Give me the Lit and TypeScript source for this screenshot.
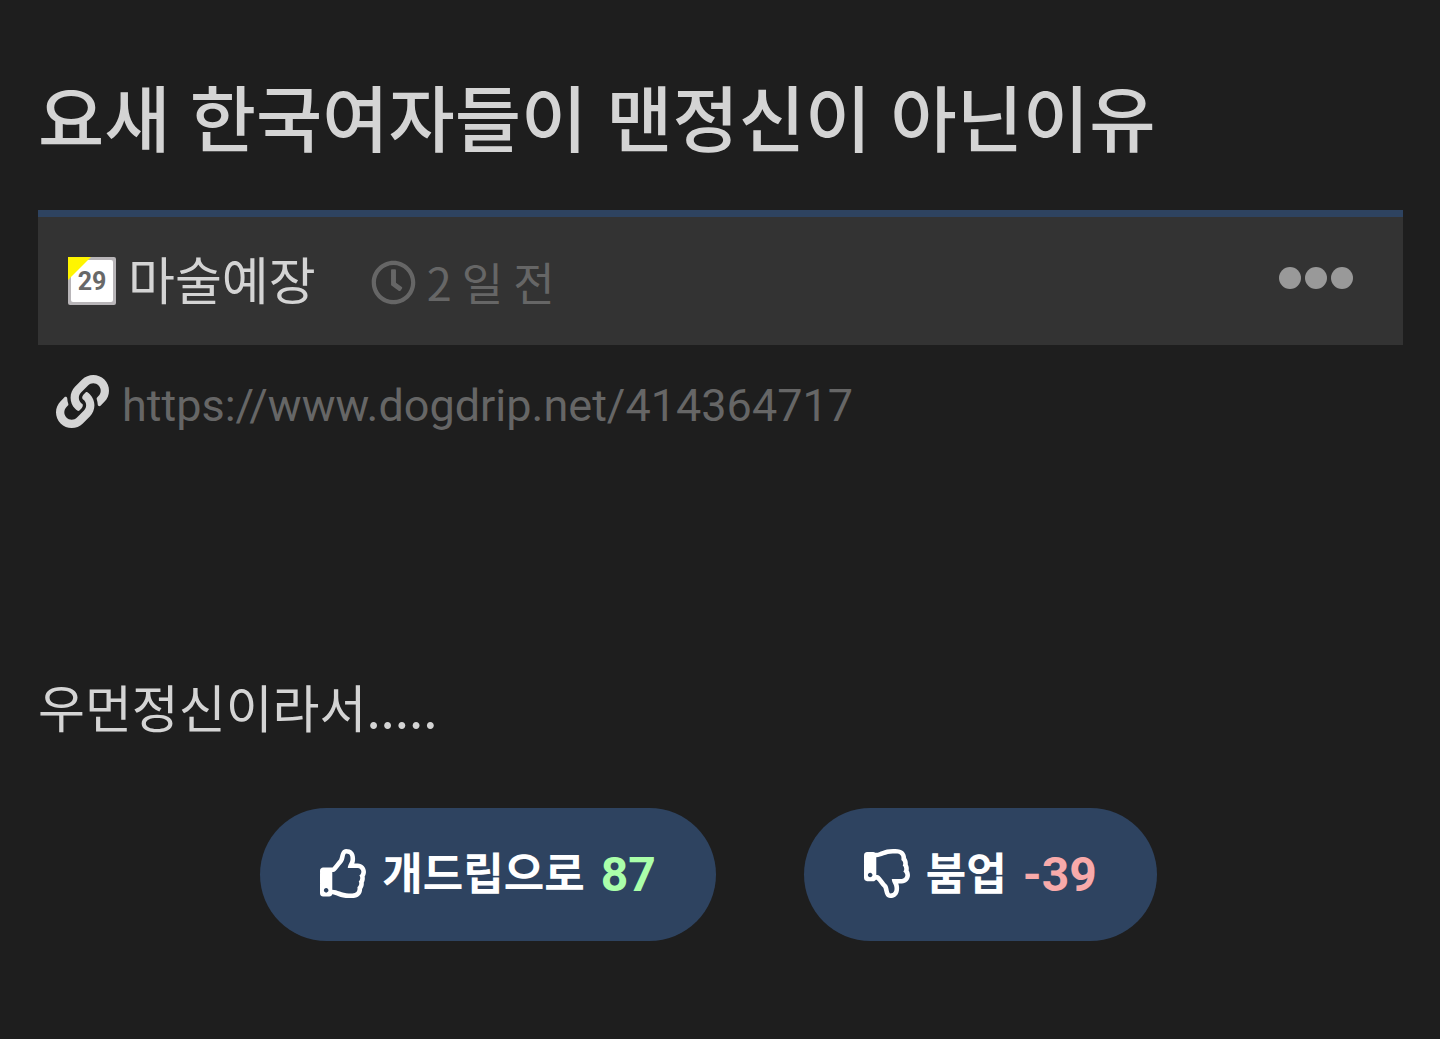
import { LitElement, html, css, svg } from "lit";
import { customElement } from "lit/decorators.js";

const LINK = "M326.612 185.391c59.747 59.809 58.927 155.698.36 214.59-.11.12-.24.25-.36.37l-67.2 67.2c-59.27 59.27-155.699 59.262-214.96 0-59.27-59.26-59.27-155.7 0-214.96l37.106-37.106c9.84-9.84 26.786-3.3 27.294 10.606.648 17.722 3.826 35.527 9.69 52.721 1.986 5.822.567 12.262-3.783 16.612l-13.087 13.087c-28.026 28.026-28.905 73.66-1.155 101.96 28.024 28.579 74.086 28.749 102.325.51l67.2-67.19c28.191-28.191 28.073-73.757 0-101.83-3.701-3.694-7.429-6.564-10.341-8.569a16.037 16.037 0 0 1-6.947-12.606c-.396-10.567 3.348-21.456 11.698-29.806l21.054-21.055c5.521-5.521 14.182-6.199 20.584-1.731a152.482 152.482 0 0 1 20.522 17.197zM467.547 44.449c-59.261-59.262-155.69-59.27-214.96 0l-67.2 67.2c-.12.12-.25.25-.36.37-58.566 58.892-59.387 154.781.36 214.59a152.454 152.454 0 0 0 20.521 17.196c6.402 4.468 15.064 3.789 20.584-1.731l21.054-21.055c8.35-8.35 12.094-19.239 11.698-29.806a16.037 16.037 0 0 0-6.947-12.606c-2.912-2.005-6.64-4.875-10.341-8.569-28.073-28.073-28.191-73.639 0-101.83l67.2-67.19c28.239-28.239 74.3-28.069 102.325.51 27.75 28.3 26.872 73.934-1.155 101.96l-13.087 13.087c-4.35 4.35-5.769 10.79-3.783 16.612 5.864 17.194 9.042 34.999 9.69 52.721.509 13.906 17.454 20.446 27.294 10.606l37.106-37.106c59.271-59.259 59.271-155.699.001-214.959z";
const CLOCK = "M256 8C119 8 8 119 8 256s111 248 248 248 248-111 248-248S393 8 256 8zm0 448c-110.5 0-200-89.5-200-200S145.5 56 256 56s200 89.5 200 200-89.5 200-200 200zm61.8-104.4l-84.9-61.7c-3.1-2.3-4.9-5.9-4.9-9.7V116c0-6.6 5.4-12 12-12h32c6.6 0 12 5.4 12 12v141.7l66.8 48.6c5.4 3.9 6.5 11.4 2.6 16.8L334.6 349c-3.9 5.3-11.4 6.5-16.8 2.6z";
const UP = "M466.27 286.69C475.04 271.84 480 256 480 236.85c0-44.015-37.218-85.58-85.82-85.58H357.7c4.92-12.81 8.85-28.13 8.85-46.54C366.55 31.936 328.86 0 271.28 0c-61.607 0-58.093 94.933-71.76 108.6-22.747 22.747-49.615 66.447-68.76 83.4H32c-17.673 0-32 14.327-32 32v240c0 17.673 14.327 32 32 32h64c14.893 0 27.408-10.174 30.978-23.95 44.509 1.001 75.06 39.94 177.802 39.94 7.22 0 15.22.01 22.22.01 77.117 0 111.986-39.423 112.94-95.33 13.319-18.425 20.299-43.122 17.34-66.99 9.854-18.452 13.664-40.343 8.99-62.99zm-61.75 53.83c12.56 21.13 1.26 49.41-13.94 57.57 7.7 48.78-17.608 65.9-53.12 65.9h-37.82c-71.639 0-118.029-37.82-171.64-37.82V240h10.92c28.36 0 67.98-70.89 94.54-97.46 28.36-28.36 18.91-75.63 37.82-94.54 47.27 0 47.27 32.98 47.27 56.73 0 39.17-28.36 56.72-28.36 94.54h103.99c21.11 0 37.73 18.91 37.82 37.82.09 18.9-12.82 37.81-22.27 37.81 13.489 14.555 16.371 45.236-5.21 65.62zM88 432c0 13.255-10.745 24-24 24s-24-10.745-24-24 10.745-24 24-24 24 10.745 24 24z";
const DOWN = "M466.27 225.31c4.674-22.647.864-44.538-8.99-62.99 2.958-23.868-4.021-48.565-17.34-66.99C438.986 39.423 404.117 0 327 0c-7 0-15 .01-22.22.01C201.195.01 168.997 40 128 40h-10.845c-5.64-4.975-13.042-8-21.155-8H32C14.327 32 0 46.327 0 64v240c0 17.673 14.327 32 32 32h64c11.842 0 22.175-6.438 27.708-16h7.052c19.146 16.953 46.013 60.653 68.76 83.4 13.667 13.667 10.153 108.6 71.76 108.6 57.58 0 95.27-31.936 95.27-104.73 0-18.41-3.93-33.73-8.85-46.54h36.48c48.602 0 85.82-41.565 85.82-85.58 0-19.15-4.96-34.99-13.73-49.84zM64 296c-13.255 0-24-10.745-24-24s10.745-24 24-24 24 10.745 24 24-10.745 24-24 24zm330.18 16.73H290.19c0 37.82 28.36 55.37 28.36 94.54 0 23.75 0 56.73-47.27 56.73-18.91-18.91-9.46-66.18-37.82-94.54C206.9 342.89 167.28 272 138.92 272H128V85.83c53.611 0 100.001-37.82 171.64-37.82h37.82c35.512 0 60.82 17.12 53.12 65.9 15.2 8.16 26.5 36.44 13.94 57.57 21.581 20.384 18.699 51.065 5.21 65.62 9.45 0 22.36 18.91 22.27 37.81-.09 18.91-16.71 37.82-37.82 37.82z";

const icon = (name: string, d: string, width = 512) => html`
  <svg class="icon ${name}" viewBox="0 0 ${width} 512" aria-hidden="true">${svg`<path d=${d}></path>`}</svg>
`;

@customElement("app-root")
export class AppRoot extends LitElement {
  static styles = css`
    :host {
      display: block;
      box-sizing: border-box;
      min-height: 100vh;
      padding: 66px 37px 64px 38px;
      background: #1e1e1e;
      color: #d4d4d4;
      font-family: Roboto, "Noto Sans CJK KR", sans-serif;
      font-size: 51px;
      line-height: 72px;
    }
    .icon { display: block; flex: none; fill: currentColor; }
    .title {
      margin: 0 0 36px;
      font-family: Inter, "Noto Sans CJK KR", sans-serif;
      font-size: 72px;
      font-weight: 500;
      line-height: 108px;
    }
    .meta {
      display: flex;
      align-items: center;
      box-sizing: border-box;
      min-height: 135px;
      padding: 0 50px 0 30px;
      border-top: 7px solid #2e4360;
      background: #333;
    }
    .badge { display: block; flex: none; width: 48px; height: 48px; margin-right: 12px; }
    .badge-text { font: 700 25px Roboto, sans-serif; fill: #686868; }
    .author { color: inherit; text-decoration: none; margin-right: 55px; padding-top: 4px; }
    .time {
      display: flex;
      align-items: center;
      gap: 11px;
      padding-top: 2px;
      color: #666;
      font-size: 45px;
      font-family: "Noto Sans CJK KR", sans-serif;
      font-weight: 400;
    }
    .clock { width: 45px; height: 45px; }
    .more {
      display: flex;
      gap: 4px;
      margin-left: auto;
      padding: 0 0 6px;
      border: 0;
      background: none;
    }
    .dot { width: 22px; height: 22px; border-radius: 50%; background: #999; }
    .source {
      display: flex;
      align-items: center;
      gap: 13px;
      padding: 15px 18px;
    }
    .chain { width: 53px; height: 53px; }
    .url { padding-top: 10px; color: #666; font-size: 45px; text-decoration: none; }
    .content { margin: 213px 0 66px; font-family: "Noto Sans CJK KR", sans-serif; }
    .votes { display: flex; flex-wrap: wrap; justify-content: center; gap: 88px; padding-right: 24px; }
    .vote {
      display: flex;
      align-items: center;
      gap: 16px;
      min-height: 133px;
      padding: 0 60px;
      border: 0;
      border-radius: 67px;
      background: #2e4360;
      color: #fff;
      font: 700 44px/64px Roboto, "Noto Sans CJK KR", sans-serif;
    }
    .thumb { width: 46px; height: 49px; margin-bottom: 3px; }
    .count { font-size: 48px; font-weight: 700; }
    .good { color: #aaffaa; }
    .bad { color: #f8aaaa; }
  `;

  render() {
    return html`
      <main>
        <h1 class="title">요새 한국여자들이 맨정신이 아닌이유</h1>
        <div class="meta">
          <svg class="badge" viewBox="0 0 48 48" role="img" aria-label="29">
            <rect width="48" height="48" rx="2" fill="#b8b5b8"></rect>
            <rect x="3" y="3" width="42" height="42" rx="2" fill="#fff"></rect>
            <path d="M0 0H23L0 23Z" fill="#fff500"></path>
            <text class="badge-text" x="24" y="33" text-anchor="middle">29</text>
          </svg>
          <a class="author" href="#author">마술예장</a>
          <span class="time">${icon("clock", CLOCK)}<time>2 일 전</time></span>
          <button class="more" type="button" aria-label="더보기">
            <span class="dot"></span><span class="dot"></span><span class="dot"></span>
          </button>
        </div>
        <div class="source">
          ${icon("chain", LINK)}
          <a class="url" href="https://www.dogdrip.net/414364717">https://www.dogdrip.net/414364717</a>
        </div>
        <p class="content">우먼정신이라서.....</p>
        <div class="votes">
          <button class="vote" type="button">
            ${icon("thumb", UP, 480)}<span>개드립으로</span><span class="count good">87</span>
          </button>
          <button class="vote" type="button">
            ${icon("thumb", DOWN, 480)}<span>붐업</span><span class="count bad">-39</span>
          </button>
        </div>
      </main>
    `;
  }
}
